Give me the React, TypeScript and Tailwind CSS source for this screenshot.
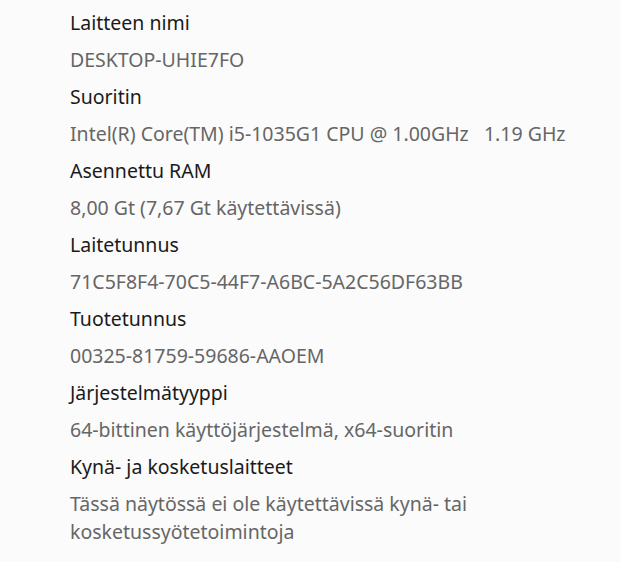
const specs = [
  { label: 'Laitteen nimi', value: 'DESKTOP-UHIE7FO' },
  { label: 'Suoritin', value: 'Intel(R) Core(TM) i5-1035G1 CPU @ 1.00GHz   1.19 GHz' },
  { label: 'Asennettu RAM', value: '8,00 Gt (7,67 Gt käytettävissä)' },
  { label: 'Laitetunnus', value: '71C5F8F4-70C5-44F7-A6BC-5A2C56DF63BB' },
  { label: 'Tuotetunnus', value: '00325-81759-59686-AAOEM' },
  { label: 'Järjestelmätyyppi', value: '64-bittinen käyttöjärjestelmä, x64-suoritin' },
  { label: 'Kynä- ja kosketuslaitteet', value: 'Tässä näytössä ei ole käytettävissä kynä- tai kosketussyötetoimintoja' },
];

export default function App() {
  return (
    <div className="w-[621px] h-[562px] overflow-hidden bg-[#fbfbfb] pl-[70px] pt-[9px] font-['Noto_Sans',sans-serif]">
      <div className="flex flex-col gap-[9px] max-w-[520px]">
        {specs.map((s) => (
          <div key={s.label} className="contents">
            <div className="text-[19.5px] leading-[28px] text-[#1a1a1a]">{s.label}</div>
            <div className="text-[19.5px] leading-[28px] text-[#666666] whitespace-pre-wrap">{s.value}</div>
          </div>
        ))}
      </div>
    </div>
  );
}
